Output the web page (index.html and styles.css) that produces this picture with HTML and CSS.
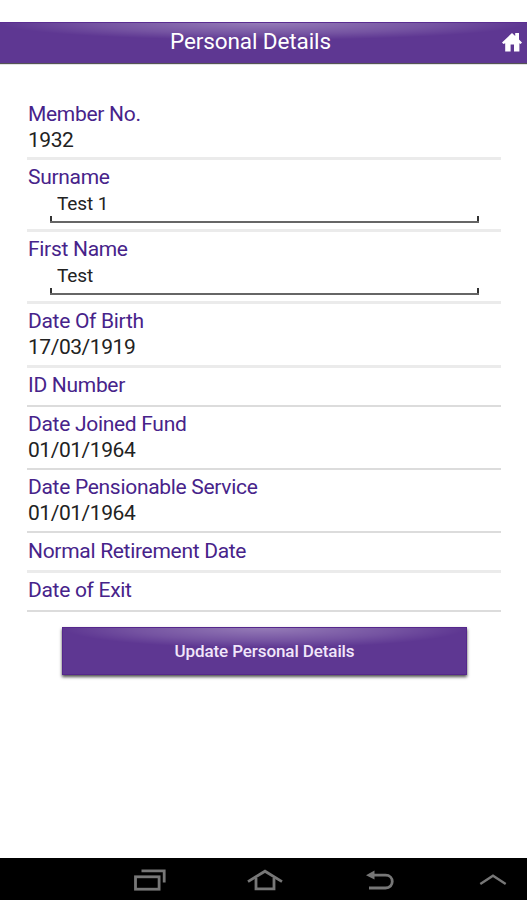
FILE: index.html
```
<!DOCTYPE html>
<html lang="en">
  <head>
    <meta charset="UTF-8" />
    <meta name="viewport" content="width=device-width, initial-scale=1.0" />
    <title>Personal Details</title>
    <link rel="stylesheet" href="styles.css">
  </head>
  <body>
    <header>
      <h1>Personal Details</h1>
      <a class="home" href="#" aria-label="Home">
        <svg width="20" height="20" viewBox="0 0 20 20">
          <path d="M0 10.5 L10 1 L13.2 4 V1 H17 V7.5 L20 10.5 L18.6 12 L17.4 11.2 V19.5 H12 V12.5 H8.6 V19.5 H3.2 V11.2 L1.4 12 Z" fill="#fff" />
        </svg>
      </a>
    </header>

    <form class="details">
      <div class="row">
        <div class="label">Member No.</div>
        <div class="value">1932</div>
      </div>
      <div class="row edit">
        <label class="label" for="surname">Surname</label>
        <input type="text" id="surname" value="Test 1" />
      </div>
      <div class="row edit">
        <label class="label" for="firstName">First Name</label>
        <input type="text" id="firstName" value="Test" />
      </div>
      <div class="row tall">
        <div class="label">Date Of Birth</div>
        <div class="value">17/03/1919</div>
      </div>
      <div class="row empty thin">
        <div class="label">ID Number</div>
      </div>
      <div class="row thin">
        <div class="label">Date Joined Fund</div>
        <div class="value">01/01/1964</div>
      </div>
      <div class="row thin">
        <div class="label">Date Pensionable Service</div>
        <div class="value">01/01/1964</div>
      </div>
      <div class="row empty last">
        <div class="label">Normal Retirement Date</div>
      </div>
      <div class="row empty thin">
        <div class="label">Date of Exit</div>
      </div>

      <button type="button">Update Personal Details</button>
    </form>

    <!-- Android navigation bar -->
    <footer>
      <svg width="34" height="24" viewBox="0 0 34 24" fill="none" stroke="#777" stroke-width="2.8">
        <rect x="3.5" y="8.8" width="23.6" height="12.4" />
        <path d="M9.5 2.8 H32.2 V14.5" />
      </svg>
      <svg width="36" height="24" viewBox="0 0 36 24" fill="none" stroke="#777" stroke-width="2.8">
        <path d="M1 13.6 L18 3.2 L35 13.6" />
        <path d="M9 10 V20.8 H27 V10" />
      </svg>
      <svg width="30" height="24" viewBox="0 0 30 24" fill="none" stroke="#777" stroke-width="2.8">
        <path d="M8 7.2 H20.5 C29.5 7.2 29.5 20 20.5 20 H4" />
        <path d="M1 7.2 L9.5 2.5 V11.5 Z" fill="#777" stroke="none" />
      </svg>
      <svg width="28" height="24" viewBox="0 0 28 24" fill="none" stroke="#777" stroke-width="2.4">
        <path d="M1.3 16 L14 7.8 L26.7 16" />
      </svg>
    </footer>
  </body>
</html>
```
FILE: styles.css
```
* {
  box-sizing: border-box;
}

body {
  font-family: Roboto, "Liberation Sans", sans-serif;
  margin: 0;
  padding-top: 22px;
  height: 900px;
  display: flex;
  flex-direction: column;
  background-color: #fff;
  overflow: hidden;
}

header {
  display: grid;
  grid-template-columns: 26px 1fr 26px;
  height: 41px;
  background: radial-gradient(ellipse 50% 17px at 50% 0, rgba(255, 255, 255, 0.34), rgba(255, 255, 255, 0.14) 65%, rgba(255, 255, 255, 0) 100%), #5e3792;
  border-top: 1px solid #5a2d91;
  box-shadow: 0 1px 1px #555;
}

header h1 {
  margin: 0;
  grid-column: 2;
  color: #fff;
  font-size: 22.5px;
  font-weight: 400;
  line-height: 37px;
  letter-spacing: -0.1px;
  text-align: center;
  text-indent: -26px;
}

.home {
  padding: 9px 0 0 1px;
}

.home svg {
  display: block;
}

.details {
  flex: 1;
  margin: 34px 26px 0 27px;
}

.row {
  height: 63px;
  padding: 5px 0 0 1px;
  border-bottom: 3px solid #ebebeb;
}

.row.edit {
  height: 72px;
}

.row.tall {
  height: 64px;
}

.row.empty {
  height: 39px;
}

.row.thin {
  border-bottom: 2px solid #dcdcdc;
}

.row.last {
  height: 40px;
  padding-top: 6px;
}

.label {
  display: block;
  color: #47238a;
  font-size: 21px;
  line-height: 25px;
  letter-spacing: -0.3px;
}

.value {
  color: #222;
  font-size: 21px;
  line-height: 26px;
  letter-spacing: -0.45px;
}

.row input {
  display: block;
  width: 429px;
  height: 33px;
  margin-left: 22px;
  padding: 0 7px 4px;
  border: none;
  border-bottom: 2px solid #666;
  background: linear-gradient(#333, #333) left bottom / 2px 5px no-repeat,
    linear-gradient(#333, #333) right bottom / 2px 5px no-repeat;
  color: #222;
  font-family: inherit;
  font-size: 19px;
  letter-spacing: -0.1px;
  outline: none;
}

button {
  display: block;
  width: 405px;
  height: 48px;
  margin: 15px 0 0 35px;
  padding: 0;
  border: 1px solid #55278c;
  background: radial-gradient(ellipse 50% 20px at 50% 0, rgba(255, 255, 255, 0.34), rgba(255, 255, 255, 0.14) 65%, rgba(255, 255, 255, 0) 100%), #5e3792;
  box-shadow: 0 2px 3px rgba(0, 0, 0, 0.7);
  color: #f1e6fa;
  font-family: inherit;
  font-size: 17px;
  font-weight: 500;
  letter-spacing: -0.1px;
}

footer {
  display: flex;
  height: 42px;
  padding: 10px 20px 0 132px;
  justify-content: space-between;
  background-color: #000;
}

footer svg:nth-child(2) {
  margin-left: -3px;
}

footer svg:nth-child(3) {
  margin-left: -2px;
}
```
